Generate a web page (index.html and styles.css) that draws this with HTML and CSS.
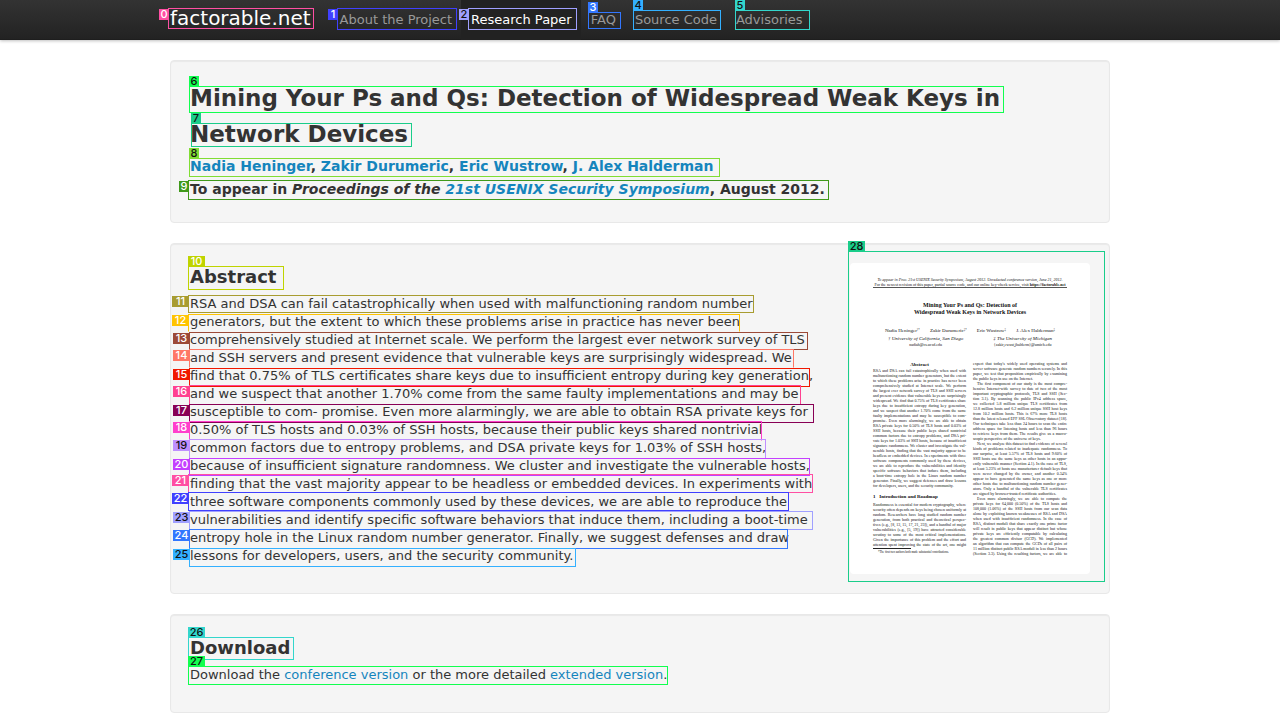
FILE: index.html
```html
<!DOCTYPE html>
<html lang="en">
<head>
<meta charset="utf-8">
<title>factorable.net - Research Paper</title>
<link rel="stylesheet" href="styles.css">
</head>
<body>
<header class="navbar">
  <div class="container nav-row">
    <a class="brand" href="#">factorable.net</a>
    <nav class="nav">
      <a href="#">About the Project</a>
      <a href="#" class="active">Research Paper</a>
      <a href="#">FAQ</a>
      <a href="#">Source Code</a>
      <a href="#">Advisories</a>
    </nav>
  </div>
</header>
<main class="container content">
  <section class="well">
    <h1>Mining Your Ps and Qs: Detection of Widespread Weak Keys in <br>Network Devices</h1>
    <h4><a href="#">Nadia Heninger</a>, <a href="#">Zakir Durumeric</a>, <a href="#">Eric Wustrow</a>, <a href="#">J. Alex Halderman</a></h4>
    <h4>To appear in <em>Proceedings of the <a href="#">21st USENIX Security Symposium</a></em>, August 2012.</h4>
  </section>
  <section class="well abstract">
    <div>
      <h2>Abstract</h2>
      <p>RSA and DSA can fail catastrophically when used with malfunctioning random number generators, but the extent to which these problems arise in practice has never been comprehensively studied at Internet scale. We perform the largest ever network survey of TLS and SSH servers and present evidence that vulnerable keys are surprisingly widespread. We find that 0.75% of TLS certificates share keys due to insufficient entropy during key generation, and we suspect that another 1.70% come from the same faulty implementations and may be susceptible to com- promise. Even more alarmingly, we are able to obtain RSA private keys for 0.50% of TLS hosts and 0.03% of SSH hosts, because their public keys shared nontrivial common factors due to entropy problems, and DSA private keys for 1.03% of SSH hosts, because of insufficient signature randomness. We cluster and investigate the vulnerable hosts, finding that the vast majority appear to be headless or embedded devices. In experiments with three software components commonly used by these devices, we are able to reproduce the vulnerabilities and identify specific software behaviors that induce them, including a boot-time entropy hole in the Linux random number generator. Finally, we suggest defenses and draw lessons for developers, users, and the security community.</p>
    </div>
    <div class="paper">
      <div class="paper-note"><span><i>To appear in Proc. 21st USENIX Security Symposium, August 2012. Unredacted conference version, June 21, 2012.</i></span><span>For the newest revision of this paper, partial source code, and our online key-check service, visit <b>https://factorable.net</b></span></div>
      <div class="paper-title">Mining Your Ps and Qs: Detection of<br>Widespread Weak Keys in Network Devices</div>
      <div class="paper-authors"><span>Nadia Heninger<sup>†*</sup></span><span>Zakir Durumeric<sup>‡*</sup></span><span>Eric Wustrow<sup>‡</sup></span><span>J. Alex Halderman<sup>‡</sup></span></div>
      <div class="paper-schools"><div><i>† University of California, San Diego</i><small>nadiah@cs.ucsd.edu</small></div><div><i>‡ The University of Michigan</i><small>{zakir,ewust,jhalderm}@umich.edu</small></div></div>
      <div class="paper-cols">
        <div>
          <strong class="mid">Abstract</strong>
          <span>RSA and DSA can fail catastrophically when used with</span>
          <span>malfunctioning random number generators, but the extent</span>
          <span>to which these problems arise in practice has never been</span>
          <span>comprehensively studied at Internet scale. We perform</span>
          <span>the largest ever network survey of TLS and SSH servers</span>
          <span>and present evidence that vulnerable keys are surprisingly</span>
          <span>widespread. We find that 0.75% of TLS certificates share</span>
          <span>keys due to insufficient entropy during key generation,</span>
          <span>and we suspect that another 1.70% come from the same</span>
          <span>faulty implementations and may be susceptible to com-</span>
          <span>promise. Even more alarmingly, we are able to obtain</span>
          <span>RSA private keys for 0.50% of TLS hosts and 0.03% of</span>
          <span>SSH hosts, because their public keys shared nontrivial</span>
          <span>common factors due to entropy problems, and DSA pri-</span>
          <span>vate keys for 1.03% of SSH hosts, because of insufficient</span>
          <span>signature randomness. We cluster and investigate the vul-</span>
          <span>nerable hosts, finding that the vast majority appear to be</span>
          <span>headless or embedded devices. In experiments with three</span>
          <span>software components commonly used by these devices,</span>
          <span>we are able to reproduce the vulnerabilities and identify</span>
          <span>specific software behaviors that induce them, including</span>
          <span>a boot-time entropy hole in the Linux random number</span>
          <span>generator. Finally, we suggest defenses and draw lessons</span>
          <span class="last">for developers, users, and the security community.</span>
          <strong class="intro">1&ensp; Introduction and Roadmap</strong>
          <span>Randomness is essential for modern cryptography, where</span>
          <span>security often depends on keys being chosen uniformly at</span>
          <span>random. Researchers have long studied random number</span>
          <span>generation, from both practical and theoretical perspec-</span>
          <span>tives (e.g., [8, 13, 15, 17, 21, 23]), and a handful of major</span>
          <span>vulnerabilities (e.g., [5, 19]) have attracted considerable</span>
          <span>scrutiny to some of the most critical implementations.</span>
          <span>Given the importance of this problem and the effort and</span>
          <span>attention spent improving the state of the art, one might</span>
          <small class="footnote">*The first two authors both made substantial contributions.</small>
        </div>
        <div>
          <span>expect that today's widely used operating systems and</span>
          <span>server software generate random numbers securely. In this</span>
          <span>paper, we test that proposition empirically by examining</span>
          <span class="last">the public keys in use on the Internet.</span>
          <span class="para">The first component of our study is the most compre-</span>
          <span>hensive Internet-wide survey to date of two of the most</span>
          <span>important cryptographic protocols, TLS and SSH (Sec-</span>
          <span>tion 3.1). By scanning the public IPv4 address space,</span>
          <span>we collected 5.8 million unique TLS certificates from</span>
          <span>12.8 million hosts and 6.2 million unique SSH host keys</span>
          <span>from 10.2 million hosts. This is 67% more TLS hosts</span>
          <span>than the latest released EFF SSL Observatory dataset [18].</span>
          <span>Our techniques take less than 24 hours to scan the entire</span>
          <span>address space for listening hosts and less than 96 hours</span>
          <span>to retrieve keys from them. The results give us a macro-</span>
          <span class="last">scopic perspective of the universe of keys.</span>
          <span class="para">Next, we analyze this dataset to find evidence of several</span>
          <span>kinds of problems related to inadequate randomness. To</span>
          <span>our surprise, at least 5.57% of TLS hosts and 9.60% of</span>
          <span>SSH hosts use the same keys as other hosts in an appar-</span>
          <span>ently vulnerable manner (Section 4.1). In the case of TLS,</span>
          <span>at least 5.23% of hosts use manufacturer default keys that</span>
          <span>were never changed by the owner, and another 0.34%</span>
          <span>appear to have generated the same keys as one or more</span>
          <span>other hosts due to malfunctioning random number gener-</span>
          <span>ators. Only a handful of the vulnerable TLS certificates</span>
          <span class="last">are signed by browser-trusted certificate authorities.</span>
          <span class="para">Even more alarmingly, we are able to compute the</span>
          <span>private keys for 64,000 (0.50%) of the TLS hosts and</span>
          <span>108,000 (1.06%) of the SSH hosts from our scan data</span>
          <span>alone by exploiting known weaknesses of RSA and DSA</span>
          <span>when used with insufficient randomness. In the case of</span>
          <span>RSA, distinct moduli that share exactly one prime factor</span>
          <span>will result in public keys that appear distinct but whose</span>
          <span>private keys are efficiently computable by calculating</span>
          <span>the greatest common divisor (GCD). We implemented</span>
          <span>an algorithm that can compute the GCDs of all pairs of</span>
          <span>11 million distinct public RSA moduli in less than 2 hours</span>
          <span>(Section 3.3). Using the resulting factors, we are able to</span>
        </div>
      </div>
    </div>
  </section>
  <section class="well">
    <h2>Download</h2>
    <p>Download the <a href="#">conference version</a> or the more detailed <a href="#">extended version</a>.</p>
  </section>
</main>
<div class="marks">
  <div class="mark m0 beside"><b>0</b></div>
  <div class="mark m1 beside"><b>1</b></div>
  <div class="mark m2 beside dark"><b>2</b></div>
  <div class="mark m3"><b>3</b></div>
  <div class="mark m4 dark"><b>4</b></div>
  <div class="mark m5 dark"><b>5</b></div>
  <div class="mark m6 dark"><b>6</b></div>
  <div class="mark m7 dark"><b>7</b></div>
  <div class="mark m8 dark"><b>8</b></div>
  <div class="mark m9 beside"><b>9</b></div>
  <div class="mark m10"><b>10</b></div>
  <div class="mark m11 beside"><b>11</b></div>
  <div class="mark m12 beside"><b>12</b></div>
  <div class="mark m13 beside"><b>13</b></div>
  <div class="mark m14 beside"><b>14</b></div>
  <div class="mark m15 beside"><b>15</b></div>
  <div class="mark m16 beside"><b>16</b></div>
  <div class="mark m17 beside"><b>17</b></div>
  <div class="mark m18 beside"><b>18</b></div>
  <div class="mark m19 beside dark"><b>19</b></div>
  <div class="mark m20 beside"><b>20</b></div>
  <div class="mark m21 beside"><b>21</b></div>
  <div class="mark m22 beside"><b>22</b></div>
  <div class="mark m23 beside dark"><b>23</b></div>
  <div class="mark m24 beside"><b>24</b></div>
  <div class="mark m25 beside dark"><b>25</b></div>
  <div class="mark m26 dark"><b>26</b></div>
  <div class="mark m27 dark"><b>27</b></div>
  <div class="mark m28 dark"><b>28</b></div>
</div>
</body>
</html>
```
FILE: styles.css
```css
* { box-sizing: border-box; }
body {
  position: relative;
  margin: 0;
  background: #fff;
  color: #333;
  font: 13px/18px "DejaVu Sans", sans-serif;
}
a { color: #1585bd; text-decoration: none; }
.container { max-width: 940px; margin: 0 auto; }

.navbar {
  background: linear-gradient(#333, #222);
  box-shadow: 0 1px 3px rgba(0, 0, 0, 0.25), inset 0 -1px 0 rgba(0, 0, 0, 0.1);
}
.nav-row { display: flex; }
.brand { padding: 8px 19px 12px 0; color: #fff; font-size: 20px; line-height: 20px; }
.nav { display: flex; }
.nav a { padding: 10px 9px 11px 10px; line-height: 19px; color: #999; }
.nav a.active { background: #222; color: #fff; }

.content { display: flex; flex-direction: column; gap: 20px; padding: 20px 0 7px; }
.well {
  padding: 19px;
  background: #f5f5f5;
  border: 1px solid #e8e8e8;
  border-radius: 4px;
  box-shadow: inset 0 1px 1px rgba(0, 0, 0, 0.05);
}
h1, h2, h4, p { margin: 0; }
h1 { font-size: 23px; line-height: 36px; }
h2 { margin-bottom: 5px; font-size: 18px; line-height: 27px; }
h4 { margin: 5px 0; font-size: 14px; line-height: 18px; }
p { margin-bottom: 9px; }
.abstract { display: grid; grid-template-columns: 1fr 240px; gap: 35px; align-items: start; }

.paper {
  height: 311px;
  padding: 14px 23px 0;
  background: #fff;
  border-radius: 4px;
  color: #111;
  font: 4px/5px "Liberation Serif", serif;
  white-space: nowrap;
  overflow: hidden;
}
.paper-note { display: flex; flex-direction: column; align-items: center; border-bottom: 1px solid #555; }
.paper-title { margin-top: 14px; text-align: center; font-size: 6px; line-height: 7px; font-weight: bold; color: #111; }
.paper-authors { display: flex; justify-content: space-between; margin: 12px 12px 0; font-size: 5px; line-height: 6px; }
.paper-authors sup { vertical-align: top; font-size: 3px; line-height: 4px; }
.paper-schools { display: flex; justify-content: space-around; margin-top: 2px; font-size: 5px; line-height: 6px; text-align: center; }
.paper-schools small { display: block; font-size: 4px; }
.paper-cols { display: grid; grid-template-columns: 1fr 1fr; gap: 7px; margin-top: 13px; }
.paper-cols span { display: block; text-align-last: justify; }
.paper-cols .last { text-align-last: left; }
.paper-cols .para { padding-left: 4px; }
.paper-cols strong { display: block; font-size: 5px; line-height: 7px; color: #111; }
.paper-cols .mid { text-align: center; }
.paper-cols .intro { margin: 5px 0 2px; }
.paper-cols .footnote { display: block; margin-top: 1px; padding: 2px 0 0 5px; font-size: 3px; line-height: 4px; background: linear-gradient(#222, #222) 0 0 / 38px 1px no-repeat; }

/* Numbered element markers laid over the page */
.marks { position: absolute; top: 0; left: 50%; width: 940px; margin-left: -470px; pointer-events: none; }
.mark { position: absolute; border: 1px solid var(--c); color: #fff; }
.mark.dark { color: #111; }
.mark b {
  position: absolute;
  left: -1px;
  bottom: 100%;
  min-width: 10px;
  padding: 0 1px;
  background: var(--c);
  text-align: center;
  font: 500 11px/11px Inter, sans-serif;
}
.mark.beside b { left: auto; right: 100%; top: 0; bottom: auto; }
.mark.m10 b, .m10 ~ .mark b { min-width: 17px; }
.m0 { --c: #ff4fa3; left: -2px; top: 8px; width: 146px; height: 21px; }
.m1 { --c: #4040ff; left: 167px; top: 8px; width: 120px; height: 22px; }
.m2 { --c: #a0a0ff; left: 298px; top: 8px; width: 109px; height: 22px; }
.m3 { --c: #3377ff; left: 418px; top: 12px; width: 33px; height: 17px; }
.m4 { --c: #33b0ff; left: 463px; top: 10px; width: 88px; height: 20px; }
.m5 { --c: #33d6cc; left: 565px; top: 10px; width: 75px; height: 20px; }
.m6 { --c: #11ff4f; left: 19px; top: 86px; width: 815px; height: 27px; }
.m7 { --c: #1acd8a; left: 21px; top: 123px; width: 221px; height: 24px; }
.m8 { --c: #80dd33; left: 19px; top: 158px; width: 531px; height: 19px; }
.m9 { --c: #40991a; left: 18px; top: 180px; width: 641px; height: 20px; }
.m10 { --c: #bfd400; left: 18px; top: 266px; width: 96px; height: 24px; }
.m11 { --c: #a89c30; left: 18px; top: 295px; width: 566px; height: 18px; }
.m12 { --c: #ffc400; left: 18px; top: 314px; width: 552px; height: 18px; }
.m13 { --c: #9c4a38; left: 19px; top: 332px; width: 619px; height: 18px; }
.m14 { --c: #ff7766; left: 19px; top: 349px; width: 605px; height: 19px; }
.m15 { --c: #f01800; left: 19px; top: 368px; width: 621px; height: 19px; }
.m16 { --c: #ff4090; left: 19px; top: 385px; width: 612px; height: 20px; }
.m17 { --c: #880055; left: 19px; top: 404px; width: 625px; height: 19px; }
.m18 { --c: #ff40cc; left: 19px; top: 421px; width: 573px; height: 20px; }
.m19 { --c: #bf90ff; left: 19px; top: 439px; width: 577px; height: 20px; }
.m20 { --c: #c440ff; left: 19px; top: 458px; width: 621px; height: 18px; }
.m21 { --c: #ff4fa3; left: 18px; top: 474px; width: 625px; height: 19px; }
.m22 { --c: #4040ff; left: 18px; top: 492px; width: 601px; height: 19px; }
.m23 { --c: #a0a0ff; left: 19px; top: 511px; width: 624px; height: 19px; }
.m24 { --c: #3377ff; left: 19px; top: 529px; width: 599px; height: 20px; }
.m25 { --c: #33b0ff; left: 19px; top: 548px; width: 387px; height: 19px; }
.m26 { --c: #33d6cc; left: 18px; top: 637px; width: 106px; height: 23px; }
.m27 { --c: #11ff4f; left: 18px; top: 666px; width: 480px; height: 19px; }
.m28 { --c: #1acd8a; left: 678px; top: 251px; width: 257px; height: 331px; }
.m12, .m14, .m16, .m18 { border-bottom-color: transparent; }
```
